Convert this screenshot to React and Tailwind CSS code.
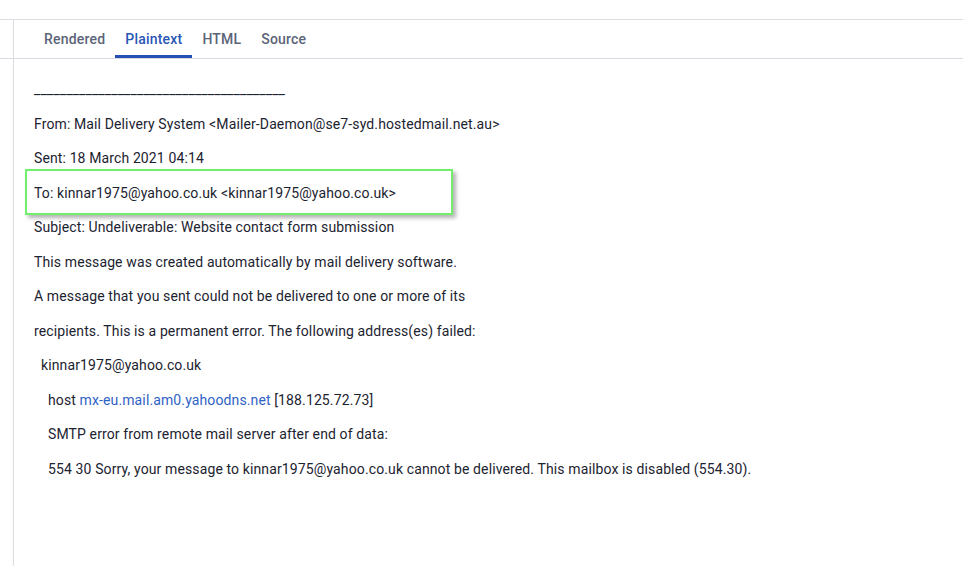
const TABS = ["Rendered", "Plaintext", "HTML", "Source"];

function Line({ children, className = "" }) {
  return (
    <div className={`h-[34.5px] leading-[34.5px] whitespace-pre ${className}`}>
      {children}
    </div>
  );
}

export default function App() {
  return (
    <div
      className="w-[963px] h-[566px] bg-white overflow-hidden text-[14px] tracking-[0.12px] text-[#1c2330]"
      style={{ fontFamily: "Roboto, 'Liberation Sans', sans-serif" }}
    >
      <div className="h-[19px]" />
      <div className="flex h-[547px] border-t border-[#dcdce3]">
        {/* left rail */}
        <div className="w-[14px] shrink-0 border-r border-[#dcdce3]">
          <div className="h-[39px] border-b border-[#dcd9e3]" />
        </div>

        <div className="flex-1 flex flex-col">
          {/* tabs */}
          <div className="h-[39px] flex items-stretch pl-[20px] border-b border-[#dcd9e3]">
            {TABS.map((t) => (
              <div
                key={t}
                className={`px-[10px] flex items-center font-medium tracking-[0.2px] border-b-[3px] ${
                  t === "Plaintext"
                    ? "text-[#2a56b4] border-[#2350b2]"
                    : "text-[#5b6478] border-transparent"
                }`}
              >
                <span className="mt-[3px]">{t}</span>
              </div>
            ))}
          </div>

          {/* plaintext body */}
          <div className="pt-[13px] pl-[20px]">
            <Line>_______________________________________</Line>
            <Line>From: Mail Delivery System &lt;Mailer-Daemon@se7-syd.hostedmail.net.au&gt;</Line>
            <Line>Sent: 18 March 2021 04:14</Line>
            <Line className="relative">
              <div className="absolute left-[-9px] top-[-7px] w-[428px] h-[46px] border-2 border-[#72f06c] shadow-[3px_3px_4px_rgba(0,0,0,0.3)]" />
              <span className="relative">To: kinnar1975@yahoo.co.uk &lt;kinnar1975@yahoo.co.uk&gt;</span>
            </Line>
            <Line>Subject: Undeliverable: Website contact form submission</Line>
            <Line>This message was created automatically by mail delivery software.</Line>
            <Line>A message that you sent could not be delivered to one or more of its</Line>
            <Line>recipients. This is a permanent error. The following address(es) failed:</Line>
            <Line className="pl-[7px]">kinnar1975@yahoo.co.uk</Line>
            <Line className="pl-[14px]">
              host <span className="text-[#2f62c6]">mx-eu.mail.am0.yahoodns.net</span> [188.125.72.73]
            </Line>
            <Line className="pl-[14px]">SMTP error from remote mail server after end of data:</Line>
            <Line className="pl-[14px]">
              554 30 Sorry, your message to kinnar1975@yahoo.co.uk cannot be delivered. This mailbox is disabled (554.30).
            </Line>
          </div>
        </div>
      </div>
    </div>
  );
}
